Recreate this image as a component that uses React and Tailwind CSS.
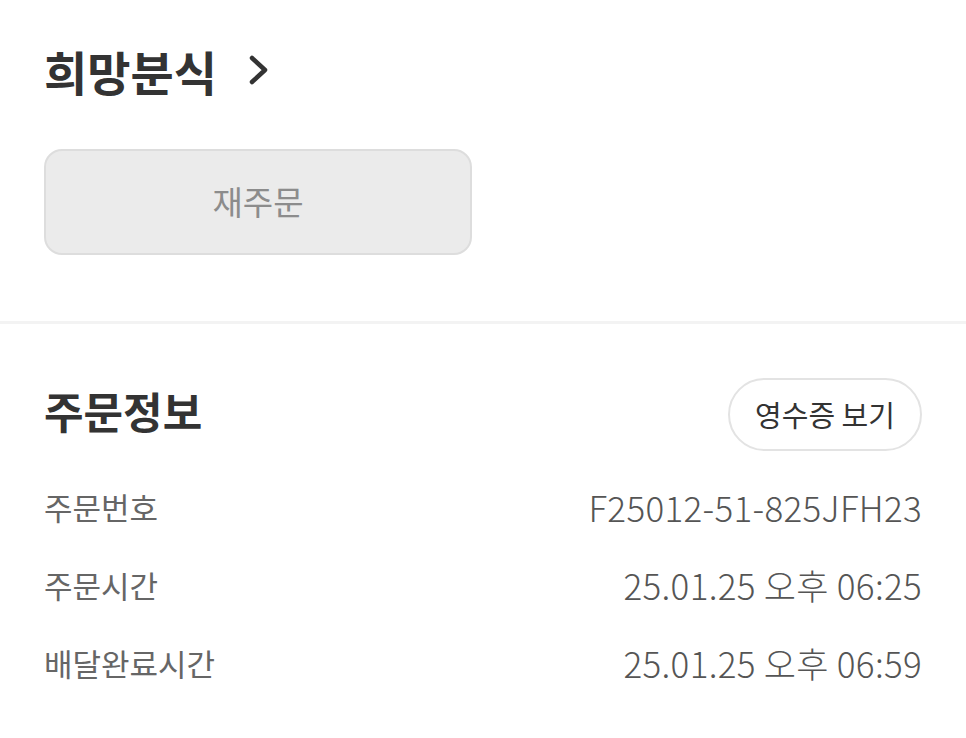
import React from "react";

const font = { fontFamily: '"Noto Sans CJK KR", "Noto Sans", sans-serif' };

const rows = [
  { label: "주문번호", value: "F25012-51-825JFH23" },
  { label: "주문시간", value: "25.01.25 오후 06:25" },
  { label: "배달완료시간", value: "25.01.25 오후 06:59" },
];

export default function App() {
  return (
    <div className="w-[966px] h-[738px] bg-white overflow-hidden" style={font}>
      {/* Store header */}
      <section className="px-[44px] pt-[38px] pb-[66px]">
        <div className="flex items-center gap-[30px]">
          <h1 className="text-[47px] leading-[66px] font-bold text-[#333333]">희망분식</h1>
          <svg width="24" height="32" viewBox="0 0 24 32" fill="none" className="-mt-[2px]">
            <path d="M5 4 L18 16 L5 28" stroke="#333333" strokeWidth="4.5" strokeLinecap="round" strokeLinejoin="round" />
          </svg>
        </div>
        <button className="mt-[45px] w-[428px] h-[106px] rounded-[18px] bg-[#ebebeb] border-2 border-[#dddddd] text-[33px] text-[#8c8c8c] flex items-center justify-center">
          재주문
        </button>
      </section>

      <div className="h-[3px] bg-[#f3f3f3]" />

      {/* Order info */}
      <section className="px-[44px] pt-[54px]">
        <div className="flex items-center justify-between">
          <h2 className="text-[43px] leading-[56px] font-bold text-[#333333] -mt-[10px]">주문정보</h2>
          <button className="w-[194px] h-[73px] rounded-full border-2 border-[#e3e3e3] text-[29px] text-[#333333] flex items-center justify-center">
            영수증 보기
          </button>
        </div>
        <div className="mt-[35px] flex flex-col gap-[36px]">
          {rows.map((r) => (
            <div key={r.label} className="flex items-center justify-between h-[42px]">
              <span className="text-[31px] text-[#666666]">{r.label}</span>
              <span className="text-[35px] font-light tracking-[0.3px] text-[#555555]">{r.value}</span>
            </div>
          ))}
        </div>
      </section>
    </div>
  );
}
